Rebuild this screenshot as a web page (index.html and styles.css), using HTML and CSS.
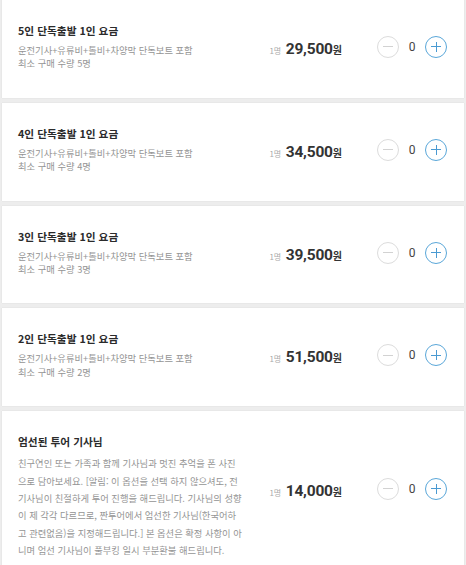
FILE: index.html
```html
<!DOCTYPE html>
<html lang="ko">
<head>
    <meta charset="UTF-8">
    <title>옵션 선택</title>
    <link rel="stylesheet" href="styles.css">
</head>
<body>

<div class="list">
    <div class="item">
        <div class="info">
            <div class="title">5인 단독출발 1인 요금</div>
            <div class="desc">운전기사+유류비+톨비+차양막 단독보트 포함<br>최소 구매 수량 5명</div>
        </div>
        <div class="price"><span class="unit">1명</span> <b>29,500</b><span class="won">원</span></div>
        <div class="counter">
            <span class="btn minus"></span>
            <span class="count">0</span>
            <span class="btn plus"></span>
        </div>
    </div>
    <div class="item">
        <div class="info">
            <div class="title">4인 단독출발 1인 요금</div>
            <div class="desc">운전기사+유류비+톨비+차양막 단독보트 포함<br>최소 구매 수량 4명</div>
        </div>
        <div class="price"><span class="unit">1명</span> <b>34,500</b><span class="won">원</span></div>
        <div class="counter">
            <span class="btn minus"></span>
            <span class="count">0</span>
            <span class="btn plus"></span>
        </div>
    </div>
    <div class="item">
        <div class="info">
            <div class="title">3인 단독출발 1인 요금</div>
            <div class="desc">운전기사+유류비+톨비+차양막 단독보트 포함<br>최소 구매 수량 3명</div>
        </div>
        <div class="price"><span class="unit">1명</span> <b>39,500</b><span class="won">원</span></div>
        <div class="counter">
            <span class="btn minus"></span>
            <span class="count">0</span>
            <span class="btn plus"></span>
        </div>
    </div>
    <div class="item">
        <div class="info">
            <div class="title">2인 단독출발 1인 요금</div>
            <div class="desc">운전기사+유류비+톨비+차양막 단독보트 포함<br>최소 구매 수량 2명</div>
        </div>
        <div class="price"><span class="unit">1명</span> <b>51,500</b><span class="won">원</span></div>
        <div class="counter">
            <span class="btn minus"></span>
            <span class="count">0</span>
            <span class="btn plus"></span>
        </div>
    </div>
    <div class="item item-long">
        <div class="info">
            <div class="title">엄선된 투어 기사님</div>
            <div class="desc note">친구연인 또는 가족과 함께 기사님과 멋진 추억을 폰 사진으로 담아보세요. [알림: 이 옵션을 선택 하지 않으셔도, 전 기사님이 친절하게 투어 진행을 해드립니다. 기사님의 성향이 제 각각 다르므로, 짠투어에서 엄선한 기사님(한국어하고 관련없음)을 지정해드립니다.] 본 옵션은 확정 사항이 아니며 엄선 기사님이 풀부킹 일시 부분환불 해드립니다.</div>
        </div>
        <div class="price"><span class="unit">1명</span> <b>14,000</b><span class="won">원</span></div>
        <div class="counter">
            <span class="btn minus"></span>
            <span class="count">0</span>
            <span class="btn plus"></span>
        </div>
    </div>
</div>

</body>
</html>
```

FILE: styles.css
```css
body{
    margin: 0;
    background: #ededed;
    font-family: "Noto Sans CJK KR", "Noto Sans", sans-serif;
    color: #333;
}
.list{
    display: flex;
    flex-direction: column;
    gap: 5px;
}
.item{
    display: flex;
    align-items: center;
    margin: 0 2px;
    padding: 23px 17px 27px 16px;
    background: #fff;
    box-shadow: 0 0 1px rgba(0,0,0,0.12);
}
.info{
    flex: 1;
    min-width: 0;
}
.title{
    font-size: 10.7px;
    line-height: 15px;
    font-weight: bold;
    color: #2b2b2b;
}
.desc{
    margin-top: 6px;
    font-size: 9.3px;
    line-height: 13.4px;
    color: #949494;
}
.note{
    max-width: 224px;
    line-height: 17.4px;
}
.item-long .price,
.item-long .counter{
    margin-bottom: 16px;
}
.price{
    text-align: right;
    white-space: nowrap;
    color: #333;
}
.price .unit{
    font-size: 8px;
    color: #aaa;
}
.price b{
    font-family: "Roboto", "Noto Sans", sans-serif;
    font-size: 15.5px;
    font-weight: bold;
    letter-spacing: -0.2px;
}
.price .won{
    font-size: 10px;
    font-weight: bold;
}
.counter{
    display: flex;
    align-items: center;
    margin-left: 35px;
}
.count{
    width: 26px;
    text-align: center;
    font-family: "Roboto", sans-serif;
    font-size: 12px;
    color: #444;
}
.btn{
    position: relative;
    width: 20px;
    height: 20px;
    border-radius: 50%;
    border: 1px solid #dcdcdc;
}
.btn::before,
.plus::after{
    content: "";
    position: absolute;
    left: 50%;
    top: 50%;
    width: 10px;
    height: 1px;
    margin: -0.5px 0 0 -5px;
    background: #d2d2d2;
}
.plus{
    border-color: #5aa7d9;
}
.plus::before{
    background: #4a9ad2;
}
.plus::after{
    width: 1px;
    height: 10px;
    margin: -5px 0 0 -0.5px;
    background: #4a9ad2;
}
```
